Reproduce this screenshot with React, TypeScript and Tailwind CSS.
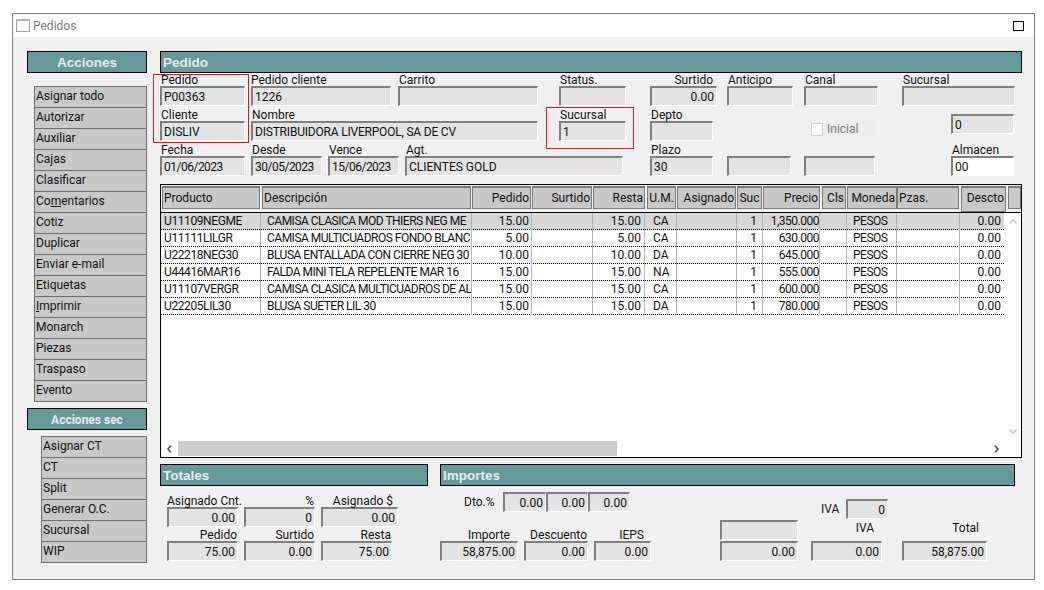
import React from 'react';

const acciones = [
  'Asignar todo', 'Autorizar', 'Auxiliar', 'Cajas', 'Clasificar', 'Comentarios', 'Cotiz', 'Duplicar',
  'Enviar e-mail', 'Etiquetas', 'Imprimir', 'Monarch', 'Piezas', 'Traspaso', 'Evento',
];
const accionesSec = ['Asignar CT', 'CT', 'Split', 'Generar O.C.', 'Sucursal', 'WIP'];

// header cells: text, width + left gap, text position
const headers = [
  { t: 'Producto', c: 'ml-px w-[98px] pl-px' },
  { t: 'Descripción', c: 'ml-[2px] w-[209px] pl-px' },
  { t: 'Pedido', c: 'ml-px w-[59px] text-right pr-px' },
  { t: 'Surtido', c: 'ml-px w-[60px] text-right pr-px' },
  { t: 'Resta', c: 'ml-px w-[52px] text-right pr-px' },
  { t: 'U.M.', c: 'ml-[2px] w-[29px] text-center' },
  { t: 'Asignado', c: 'ml-px w-[59px] text-right pr-px' },
  { t: 'Suc', c: 'ml-px w-[25px] text-center' },
  { t: 'Precio', c: 'ml-px w-[57px] text-right pr-px' },
  { t: 'Cls', c: 'ml-[2px] w-[24px] text-right pr-px' },
  { t: 'Moneda', c: 'ml-px w-[50px] text-right pr-px' },
  { t: 'Pzas.', c: 'w-[62px] pl-px' },
  { t: 'Descto', c: 'ml-[2px] w-[45px] h-[26px] text-right pr-px' },
  { t: '', c: 'ml-[2px] w-[13px]' },
];

const rows = [
  ['U11109NEGME', 'CAMISA CLASICA MOD THIERS NEG ME', '15.00', '15.00', 'CA', '1,350.000'],
  ['U11111LILGR', 'CAMISA MULTICUADROS FONDO BLANC', '5.00', '5.00', 'CA', '630.000'],
  ['U22218NEG30', 'BLUSA ENTALLADA CON CIERRE NEG 30', '10.00', '10.00', 'DA', '645.000'],
  ['U44416MAR16', 'FALDA MINI TELA REPELENTE MAR 16', '15.00', '15.00', 'NA', '555.000'],
  ['U11107VERGR', 'CAMISA CLASICA MULTICUADROS DE AL', '15.00', '15.00', 'CA', '600.000'],
  ['U22205LIL30', 'BLUSA SUETER LIL 30', '15.00', '15.00', 'DA', '780.000'],
];

const sep = 'border-r border-[#b4b4b4] overflow-hidden whitespace-nowrap';

function Box({ value, right, white, className = '', valueClass = '' }: {
  value?: string; right?: boolean; white?: boolean; className?: string; valueClass?: string;
}) {
  return (
    <div
      className={`h-[20px] border-t-2 border-l-2 border-r border-b border-t-[#808080] border-l-[#808080] border-r-white border-b-white leading-[19px] whitespace-nowrap overflow-hidden ${
        white ? 'bg-white' : 'bg-[#e3e3e3]'
      } ${right ? 'text-right pr-[2px]' : 'pl-[2px]'} ${valueClass} ${className}`}
    >
      {value}
    </div>
  );
}

function Field({ label, value, right, white, className = '', labelClass = 'pl-px', valueClass = '' }: {
  label?: string; value?: string; right?: boolean; white?: boolean; className?: string; labelClass?: string; valueClass?: string;
}) {
  return (
    <div className={`shrink-0 ${className}`}>
      <div className={`h-[13px] leading-[15px] whitespace-nowrap ${labelClass}`}>{label}</div>
      <Box value={value} right={right} white={white} valueClass={valueClass} />
    </div>
  );
}

function Bar({ title, className = '', textClass = "text-[13.5px] font-['Liberation_Sans',sans-serif] pl-[2px]" }: { title?: string; className?: string; textClass?: string }) {
  return (
    <div className={`h-[22px] bg-[#669999] border border-black text-[#e4ecec] font-bold leading-[22px] ${textClass} ${className}`}>
      {title}
    </div>
  );
}

function ActionList({ items, className = '' }: { items: string[]; className?: string }) {
  return (
    <div className={`border-t border-x border-[#6e6e6e] bg-[#c8c8c8] ${className}`}>
      {items.map((item) => (
        <div key={item} className="h-[21px] border-b border-[#6e6e6e] pl-px leading-[19px] text-[#111]">
          {item === 'Comentarios' ? (
            <>Co<span className="underline">m</span>entarios</>
          ) : item === 'Imprimir' ? (
            <><span className="underline">I</span>mprimir</>
          ) : (
            item
          )}
        </div>
      ))}
    </div>
  );
}

function Chevron({ dir, light }: { dir: 'left' | 'right' | 'up' | 'down'; light?: boolean }) {
  const d = {
    left: 'M6 1.5 L3 5 L6 8.5',
    right: 'M4 1.5 L7 5 L4 8.5',
    up: 'M1.5 6.5 L5 3 L8.5 6.5',
    down: 'M1.5 3.5 L5 7 L8.5 3.5',
  }[dir];
  return (
    <svg width="10" height="10" viewBox="0 0 10 10" fill="none" stroke={light ? '#c4c4c4' : '#505050'} strokeWidth="1.6">
      <path d={d} />
    </svg>
  );
}

export default function App() {
  return (
    <div className="relative w-[1044px] h-[590px] bg-white pt-[13px] pl-[12px] font-['Roboto',sans-serif] text-[12px] text-[#111] overflow-hidden">
      <div className="w-[1023px] h-[567px] border border-[#808080] flex flex-col">
        {/* Title bar */}
        <div className="h-[23px] shrink-0 bg-white flex items-center pl-[3px] pr-[10px]">
          <div className="w-[14px] h-[13px] border border-[#9aa0b8] border-t-2 border-t-[#aab4d0] bg-white" />
          <span className="ml-[3px] text-[#7c7c7c]">Pedidos</span>
          <div className="ml-auto w-[11px] h-[10px] border border-black" />
        </div>

        <div className="flex-1 bg-[#f0f0f0] flex pl-[14px] pt-[14px]">
          {/* Left column */}
          <div className="w-[120px] shrink-0">
            <Bar title="Acciones" textClass="text-[13.5px] font-['Liberation_Sans',sans-serif] text-center" />
            <ActionList items={acciones} className="ml-[7px] mt-[13px]" />
            <Bar title="Acciones sec" className="mt-[6px]" textClass="text-[12px] text-center" />
            <ActionList items={accionesSec} className="ml-[14px] mt-[6px]" />
          </div>

          {/* Right column */}
          <div className="w-[862px] ml-[13px] shrink-0">
            <Bar title="Pedido" />

            <div className="flex">
              <Field label="Pedido" value="P00363" className="w-[85px]" />
              <Field label="Pedido cliente" value="1226" className="w-[140px] ml-[6px]" labelClass="" />
              <Field label="Carrito" className="w-[140px] ml-[7px]" />
              <Field label="Status." className="w-[67px] ml-[21px]" />
              <Field label="Surtido" value="0.00" right className="w-[67px] ml-[24px]" labelClass="text-right pr-[4px]" />
              <Field label="Anticipo" className="w-[66px] ml-[10px]" />
              <Field label="Canal" className="w-[74px] ml-[11px]" />
              <Field label="Sucursal" className="w-[113px] ml-[24px]" />
            </div>

            <div className="flex mt-[2px]">
              <Field label="Cliente" value="DISLIV" className="w-[85px]" />
              <Field label="Nombre" value="DISTRIBUIDORA LIVERPOOL, SA DE CV" className="w-[287px] ml-[6px]" valueClass="tracking-[-0.2px]" />
              <Field label="Sucursal" value="1" className="w-[67px] ml-[21px]" />
              <Field label="Depto" className="w-[63px] ml-[24px]" />
              <div className="w-[64px] h-[16px] ml-[98px] mt-[13px] bg-[#eeeeee] flex items-center text-[#7a7a7a]">
                <div className="w-[12px] h-[13px] bg-white border border-[#cfcfcf]" />
                <span className="ml-[4px]">Inicial</span>
              </div>
              <Box value="0" className="w-[63px] ml-[76px] mt-[6px]" />
            </div>

            <div className="flex mt-[2px]">
              <Field label="Fecha" value="01/06/2023" className="w-[85px]" valueClass="tracking-[-0.5px]" />
              <Field label="Desde" value="30/05/2023" className="w-[71px] ml-[6px]" valueClass="tracking-[-0.5px]" />
              <Field label="Vence" value="15/06/2023" className="w-[71px] ml-[6px]" valueClass="tracking-[-0.5px]" />
              <Field label="Agt." value="CLIENTES GOLD" className="w-[218px] ml-[6px]" />
              <Field label="Plazo" value="30" className="w-[63px] ml-[27px]" />
              <Field className="w-[64px] ml-[14px]" />
              <Field className="w-[71px] ml-[13px]" />
              <Field label="Almacen" value="00" white className="w-[63px] ml-[76px]" />
            </div>

            {/* Grid */}
            <div className="mt-[8px] h-[274px] border border-black bg-white flex flex-col">
              <div className="h-[28px] shrink-0 bg-[#f0f0f0] border-b border-black pt-px flex items-start">
                {headers.map((h, i) => (
                  <div
                    key={i}
                    className={`h-[23px] shrink-0 bg-[#c8c8c8] border border-t-2 border-[#7a7a7a] leading-[21px] whitespace-nowrap overflow-hidden ${h.c}`}
                  >
                    {h.t}
                  </div>
                ))}
              </div>
              <div className="h-[228px] shrink-0 flex">
                <div className="w-[843px] shrink-0">
                  {rows.map((r, i) => (
                    <div
                      key={r[0]}
                      className={`h-[17px] grid grid-cols-[100px_211px_60px_61px_52px_32px_60px_26px_57px_27px_50px_63px_44px] border-b border-dotted border-black leading-[17px] ${
                        i === 0 ? 'bg-[#d7d7d7]' : ''
                      }`}
                    >
                      <div className={`${sep} pl-[3px] tracking-[-0.4px]`}>{r[0]}</div>
                      <div className={`${sep} pl-[6px] tracking-[-0.5px]`}>{r[1]}</div>
                      <div className={`${sep} text-right pr-[2px]`}>{r[2]}</div>
                      <div className={sep} />
                      <div className={`${sep} text-right pr-[3px]`}>{r[3]}</div>
                      <div className={`${sep} pl-[8px]`}>{r[4]}</div>
                      <div className={sep} />
                      <div className={`${sep} text-right pr-[5px]`}>1</div>
                      <div className={`${sep} text-right tracking-[-0.5px]`}>{r[5]}</div>
                      <div className={sep} />
                      <div className={`${sep} pl-[6px] tracking-[-0.5px]`}>PESOS</div>
                      <div className={sep} />
                      <div className="text-right pr-[3px]">0.00</div>
                    </div>
                  ))}
                </div>
                <div className="flex-1 flex flex-col items-center justify-between pt-[4px] pb-[5px]">
                  <Chevron dir="up" light />
                  <Chevron dir="down" light />
                </div>
              </div>
              <div className="h-[15px] shrink-0 flex items-center">
                <div className="w-[17px] flex justify-center"><Chevron dir="left" /></div>
                <div className="w-[439px] h-full bg-[#cdcdcd]" />
                <div className="ml-[370px] w-[17px] flex justify-center"><Chevron dir="right" /></div>
              </div>
            </div>

            {/* Bottom panels */}
            <div className="flex mt-[6px]">
              <div className="w-[268px] shrink-0">
                <Bar title="Totales" />
                <div className="flex mt-[8px] pl-[7px]">
                  <Field label="Asignado Cnt." value="0.00" right className="w-[71px]" labelClass="" />
                  <Field label="%" value="0" right className="w-[71px] ml-[6px]" labelClass="text-right pr-px" />
                  <Field label="Asignado $" value="0.00" right className="w-[77px] ml-[6px]" labelClass="text-right pr-[5px]" />
                </div>
                <div className="flex mt-px pl-[7px]">
                  <Field label="Pedido" value="75.00" right className="w-[71px]" labelClass="text-right pr-px" />
                  <Field label="Surtido" value="0.00" right className="w-[71px] ml-[6px]" labelClass="text-right pr-px" />
                  <Field label="Resta" value="75.00" right className="w-[71px] ml-[6px]" labelClass="text-right pr-px" />
                </div>
              </div>

              <div className="w-[575px] ml-[12px] shrink-0">
                <Bar title="Importes" />
                <div className="flex">
                  <div className="w-[211px] shrink-0 pt-[6px]">
                    <div className="flex items-center pl-[24px]">
                      <span className="w-[39px]">Dto.%</span>
                      <Box value="0.00" right className="w-[43px]" />
                      <Box value="0.00" right className="w-[42px]" />
                      <Box value="0.00" right className="w-[42px]" />
                    </div>
                    <div className="flex mt-[16px]">
                      <Field label="Importe" value="58,875.00" right className="w-[78px]" labelClass="text-right pr-[8px]" />
                      <Field label="Descuento" value="0.00" right className="w-[64px] ml-[6px]" labelClass="text-right pr-px" />
                      <Field label="IEPS" value="0.00" right className="w-[57px] ml-[6px]" labelClass="text-right pr-[7px]" />
                    </div>
                  </div>
                  <div className="w-[78px] ml-[69px] shrink-0 pt-[34px]">
                    <Box />
                    <Box value="0.00" right className="mt-px" />
                  </div>
                  <div className="w-[71px] ml-[13px] shrink-0 pt-[13px]">
                    <div className="flex items-center w-[77px]">
                      <span className="ml-[10px] w-[25px]">IVA</span>
                      <Box value="0" right className="w-[42px]" />
                    </div>
                    <div className="h-[22px] leading-[18px] text-right pr-[8px]">IVA</div>
                    <Box value="0.00" right />
                  </div>
                  <div className="w-[85px] ml-[20px] shrink-0 pt-[33px]">
                    <div className="h-[22px] leading-[18px] text-right pr-[8px]">Total</div>
                    <Box value="58,875.00" right />
                  </div>
                </div>
              </div>
            </div>
          </div>
        </div>
      </div>

      {/* Red highlight marks drawn over the form */}
      <div className="absolute left-[153px] top-[74px] w-[96px] h-[69px] border border-[#e8141c]" />
      <div className="absolute left-[546px] top-[107px] w-[88px] h-[42px] border border-[#e8141c]" />
    </div>
  );
}
